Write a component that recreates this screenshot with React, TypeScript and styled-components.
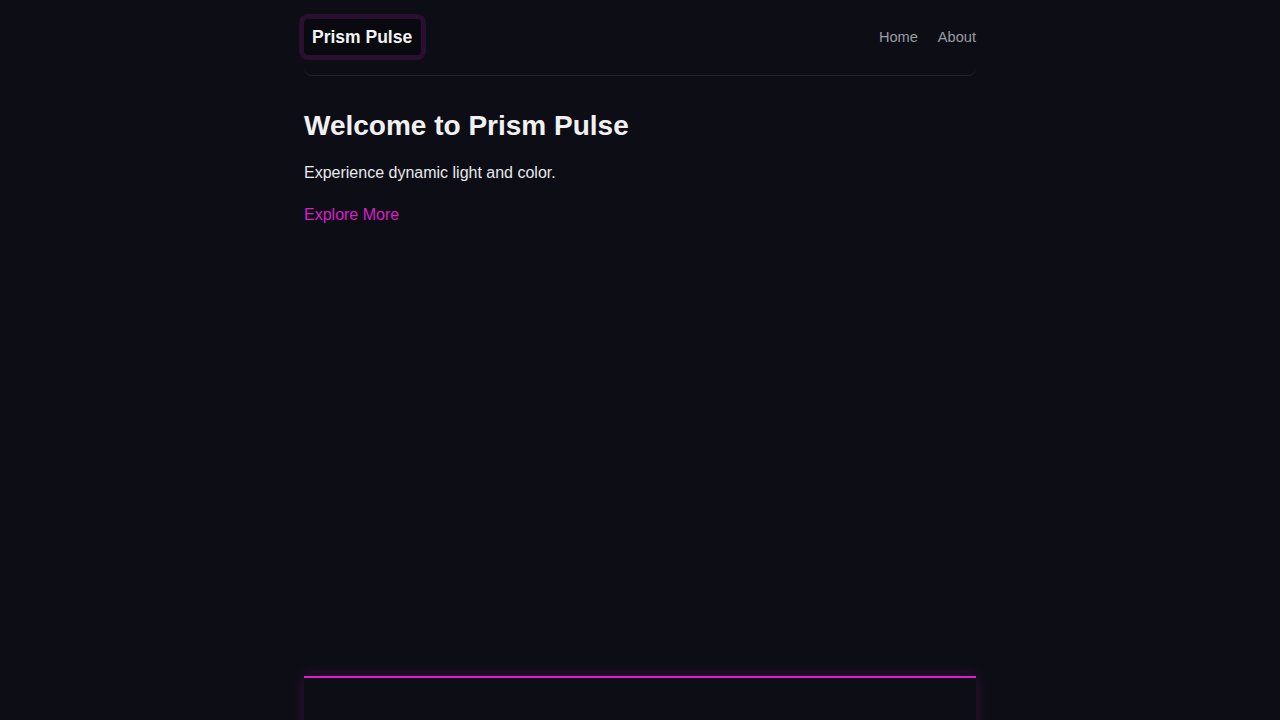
import React from 'react';
import styled, { createGlobalStyle } from 'styled-components';

const GlobalStyle = createGlobalStyle`
  html, body {
    margin: 0;
    padding: 0;
    background: #0d0e15;
    color: #f1f1f3;
    font-family: 'Liberation Sans', Arial, sans-serif;
  }
  * {
    box-sizing: border-box;
  }
`;

const Page = styled.div`
  max-width: 672px;
  margin: 0 auto;
  min-height: 100vh;
  display: flex;
  flex-direction: column;
`;

const Header = styled.header`
  display: flex;
  align-items: center;
  justify-content: space-between;
  padding: 19px 0 20px;
  border-bottom: 1px solid #232630;
  border-radius: 0 0 8px 8px;
`;

const Logo = styled.div`
  background: #090a0f;
  padding: 8px 9px 8px 8px;
  border-radius: 4px;
  box-shadow: 0 0 0 5px #2a0f30;
  font-size: 17.5px;
  line-height: 20px;
  font-weight: 700;
  color: #f3f3f5;
`;

const Nav = styled.nav`
  display: flex;
  gap: 20px;
`;

const NavLink = styled.a`
  color: #9a9ca3;
  font-size: 14.6px;
  line-height: 18px;
  text-decoration: none;
`;

const Main = styled.main`
  flex: 1;
  padding: 33px 0 0;
  min-height: 600px;
`;

const Title = styled.h1`
  margin: 0 0 18px;
  font-size: 28px;
  line-height: 34px;
  font-weight: 700;
`;

const Lead = styled.p`
  margin: 0 0 18px;
  font-size: 16px;
  line-height: 24px;
  color: #e8e8ec;
`;

const Link = styled.a`
  color: #d81ecb;
  font-size: 16px;
  line-height: 24px;
  text-decoration: none;
`;

const Footer = styled.footer`
  border-top: 2px solid #e21ad0;
  box-shadow: 0 0 14px rgba(226, 26, 208, 0.18);
  height: 120px;
`;

export default function App() {
  return (
    <>
      <GlobalStyle />
      <Page>
        <Header>
          <Logo>Prism Pulse</Logo>
          <Nav>
            <NavLink href="#">Home</NavLink>
            <NavLink href="#">About</NavLink>
          </Nav>
        </Header>
        <Main>
          <Title>Welcome to Prism Pulse</Title>
          <Lead>Experience dynamic light and color.</Lead>
          <Link href="#">Explore More</Link>
        </Main>
        <Footer />
      </Page>
    </>
  );
}
